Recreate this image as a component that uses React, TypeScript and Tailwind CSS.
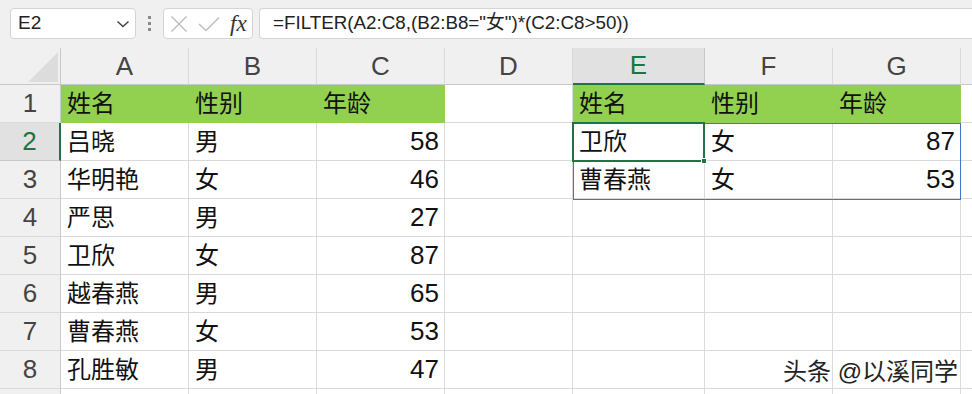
import React from "react";

const font = { fontFamily: '"Liberation Sans", "Noto Sans CJK SC", sans-serif' };

type Cell = string | number | null;

const cols = [
  { key: "A", w: "w-[128px]" },
  { key: "B", w: "w-[128px]" },
  { key: "C", w: "w-[128px]" },
  { key: "D", w: "w-[128px]" },
  { key: "E", w: "w-[132px]" },
  { key: "F", w: "w-[128px]" },
  { key: "G", w: "w-[128px]" },
];

const rows: Cell[][] = [
  ["姓名", "性别", "年龄", null, "姓名", "性别", "年龄"],
  ["吕晓", "男", 58, null, "卫欣", "女", 87],
  ["华明艳", "女", 46, null, "曹春燕", "女", 53],
  ["严思", "男", 27, null, null, null, null],
  ["卫欣", "女", 87, null, null, null, null],
  ["越春燕", "男", 65, null, null, null, null],
  ["曹春燕", "女", 53, null, null, null, null],
  ["孔胜敏", "男", 47, null, null, null, null],
  [null, null, null, null, null, null, null],
];

function Toolbar() {
  return (
    <div className="flex h-[48px] items-start overflow-hidden pt-[8px] pl-[10px]">
      <div className="flex h-[31px] w-[126px] shrink-0 items-center justify-between rounded-[4px] border border-[#d4d4d4] bg-white pl-[7px] pr-[5px]">
        <span className="text-[19px] text-[#222]">E2</span>
        <svg width="14" height="8" viewBox="0 0 14 8" fill="none">
          <path d="M1.5 1.5 L7 6.5 L12.5 1.5" stroke="#444" strokeWidth="1.5" />
        </svg>
      </div>
      <div className="flex h-[31px] w-[27px] shrink-0 flex-col items-center justify-center gap-[3px]">
        <span className="block h-[3px] w-[3px] bg-[#8a8a8a]" />
        <span className="block h-[3px] w-[3px] bg-[#8a8a8a]" />
        <span className="block h-[3px] w-[3px] bg-[#8a8a8a]" />
      </div>
      <div className="flex h-[31px] w-[90px] shrink-0 items-center rounded-[4px] border border-[#d4d4d4] bg-white pl-[6px]">
        <svg width="18" height="18" viewBox="0 0 18 18" fill="none">
          <path d="M1.5 1.5 L16.5 16.5 M16.5 1.5 L1.5 16.5" stroke="#bdbdbd" strokeWidth="1.4" />
        </svg>
        <svg className="ml-[10px]" width="22" height="16" viewBox="0 0 22 16" fill="none">
          <path d="M1 8 L8 14.5 L21 1.5" stroke="#bdbdbd" strokeWidth="1.4" />
        </svg>
        <span
          className="ml-[10px] text-[23px] italic leading-none text-[#333]"
          style={{ fontFamily: '"Liberation Serif", "DejaVu Serif", serif' }}
        >
          fx
        </span>
      </div>
      <div className="ml-[6px] flex h-[31px] w-[740px] shrink-0 items-center rounded-l-[4px] border border-r-0 border-[#d4d4d4] bg-white pl-[13px]">
        <span className="whitespace-nowrap text-[18.8px] text-[#222]">=FILTER(A2:C8,(B2:B8="女")*(C2:C8&gt;50))</span>
      </div>
    </div>
  );
}

function HeaderRow() {
  return (
    <div className="flex h-[37px]">
      <div className="relative w-[61px] shrink-0 border-r border-b border-[#c8c8c8]">
        <svg className="absolute left-[28px] top-[4px]" width="31" height="31" viewBox="0 0 31 31">
          <polygon points="30,0 30,30 0,30" fill="#dcdcdc" />
        </svg>
      </div>
      {cols.map((c) => {
        const active = c.key === "E";
        return (
          <div
            key={c.key}
            className={`${c.w} flex shrink-0 items-center justify-center text-[26px] ${
              active
                ? "border-b-[2px] border-r border-b-[#217346] border-r-[#c8c8c8] bg-[#e1e1e1] text-[#217346]"
                : "border-r border-b border-r-[#dadada] border-b-[#c8c8c8] text-[#444]"
            }`}
          >
            {c.key}
          </div>
        );
      })}
      <div className="flex-1 border-b border-[#c8c8c8]" />
    </div>
  );
}

function DataRow({ idx, cells }: { idx: number; cells: Cell[] }) {
  const activeRow = idx === 2;
  return (
    <div className="flex h-[38px]">
      <div
        className={`flex w-[61px] shrink-0 items-center justify-center text-[26px] ${
          activeRow
            ? "border-r-[2px] border-b border-r-[#217346] border-b-[#c8c8c8] bg-[#e1e1e1] text-[#217346]"
            : "border-r border-b border-r-[#c8c8c8] border-b-[#dadada] text-[#444]"
        }`}
      >
        {idx < 9 ? idx : null}
      </div>
      {cols.map((c, i) => {
        const v = cells[i];
        const green = idx === 1 && v !== null;
        const isNum = typeof v === "number";
        return (
          <div
            key={c.key}
            className={`${c.w} flex shrink-0 items-center border-r border-b text-[#111] ${
              green ? "border-[#92d050] bg-[#92d050]" : "border-[#dadada] bg-white"
            } ${isNum ? "justify-end pr-[5px] text-[26px]" : "pl-[6px] text-[24px]"}`}
          >
            {v}
          </div>
        );
      })}
      <div className="flex-1 border-b border-[#dadada] bg-white" />
    </div>
  );
}

export default function App() {
  return (
    <div className="relative h-[394px] w-[972px] overflow-hidden bg-[#f0f0f0]" style={font}>
      <Toolbar />
      <HeaderRow />
      {rows.map((r, i) => (
        <DataRow key={i} idx={i + 1} cells={r} />
      ))}

      {/* spill range outline */}
      <div className="pointer-events-none absolute left-[573px] top-[123px] h-[77px] w-[388px] border border-[#4472c4]" />
      {/* active cell */}
      <div className="pointer-events-none absolute left-[572px] top-[122px] h-[40px] w-[133px] border-[2px] border-[#217346]" />
      <div className="pointer-events-none absolute left-[701px] top-[158px] h-[6px] w-[6px] border border-white bg-[#217346]" />

      <div className="absolute left-[783px] top-[354px] text-[24px] text-[#222] [text-shadow:1px_1px_0_#fff,-1px_-1px_0_#fff,1px_-1px_0_#fff,-1px_1px_0_#fff]">
        头条 @以溪同学
      </div>
    </div>
  );
}
